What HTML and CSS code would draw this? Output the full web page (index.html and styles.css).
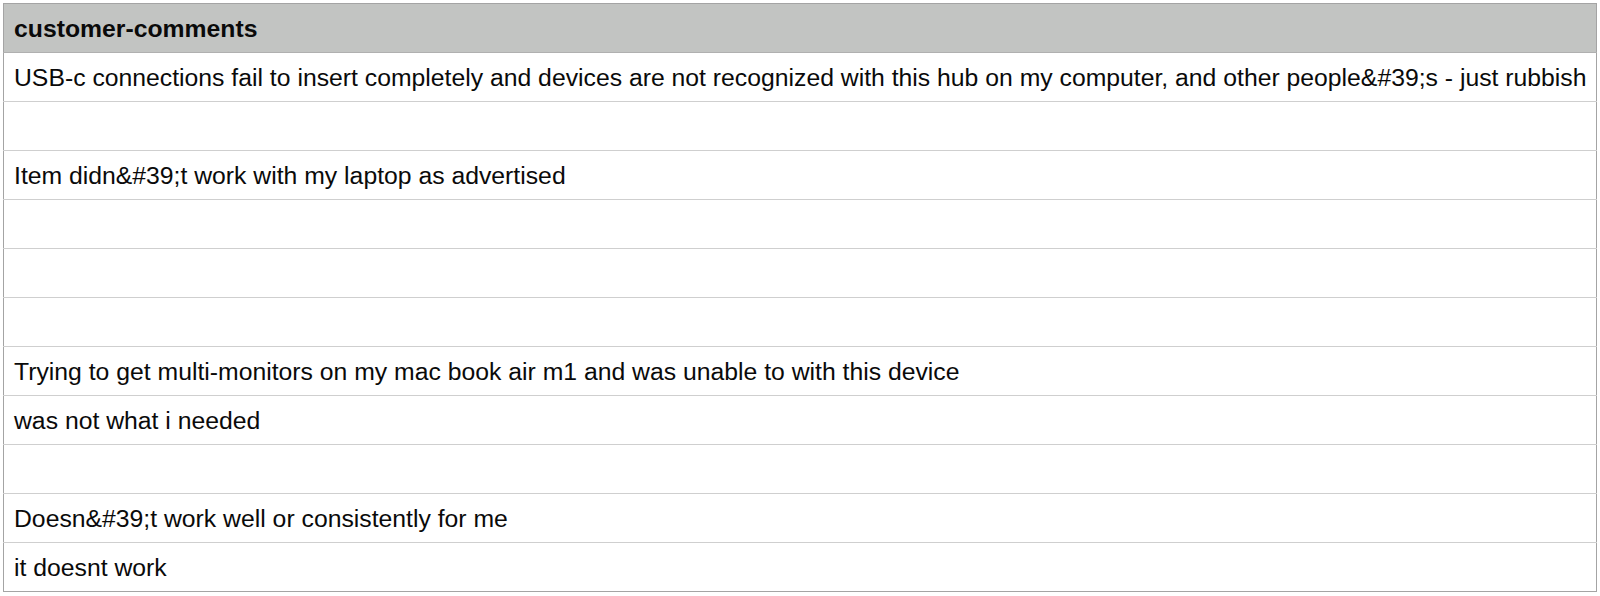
FILE: index.html
```html
<!DOCTYPE html>
<html>
<head>
<meta charset="utf-8">
<link rel="stylesheet" href="styles.css">
</head>
<body>
<table class="sheet">
  <thead>
    <tr><th>customer-comments</th></tr>
  </thead>
  <tbody>
    <tr><td>USB-c connections fail to insert completely and devices are not recognized with this hub on my computer, and other people&amp;#39;s - just rubbish</td></tr>
    <tr><td></td></tr>
    <tr><td>Item didn&amp;#39;t work with my laptop as advertised</td></tr>
    <tr><td></td></tr>
    <tr><td></td></tr>
    <tr><td></td></tr>
    <tr><td>Trying to get multi-monitors on my mac book air m1 and was unable to with this device</td></tr>
    <tr><td>was not what i needed</td></tr>
    <tr><td></td></tr>
    <tr><td>Doesn&amp;#39;t work well or consistently for me</td></tr>
    <tr><td>it doesnt work</td></tr>
  </tbody>
</table>
</body>
</html>
```
FILE: styles.css
```css
html, body {
  margin: 0;
  padding: 0;
  background: #ffffff;
}
body {
  padding: 3px 3px 0 3px;
  font-family: "Liberation Sans", Arial, sans-serif;
  color: #0a0a0a;
}
.sheet {
  width: 1594px;
  border-collapse: collapse;
  border: 1px solid #a4a4a4;
  table-layout: fixed;
}
.sheet th,
.sheet td {
  height: 49px;
  padding: 2px 10px 0 10px;
  text-align: left;
  vertical-align: middle;
  font-size: 24.75px;
  white-space: nowrap;
  overflow: hidden;
  box-sizing: border-box;
}
.sheet th {
  background: #c2c4c2;
  font-weight: bold;
  border-bottom: 1px solid #b0b0b0;
}
.sheet td {
  border-top: 1px solid #cfcfcf;
}
```
